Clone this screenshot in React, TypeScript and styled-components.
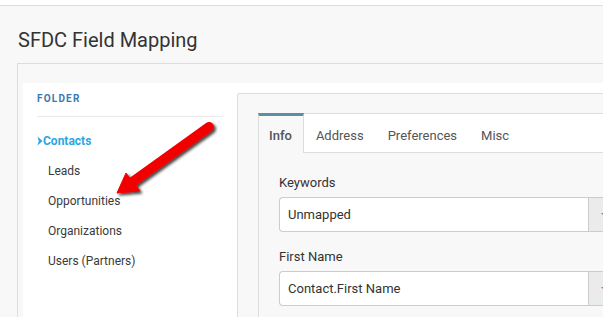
import React from 'react';
import styled, { createGlobalStyle } from 'styled-components';

const GlobalStyle = createGlobalStyle`
  html, body {
    margin: 0;
    padding: 0;
    background: #f8f8f8;
    font-family: Roboto, "Liberation Sans", Arial, sans-serif;
    color: #333;
    overflow: hidden;
  }
`;

const Page = styled.div`
  position: relative;
  width: 603px;
  height: 317px;
  overflow: hidden;
`;

const TopBar = styled.div`
  height: 5px;
  background: #fff;
  border-bottom: 1px solid #dedede;
`;

const Title = styled.h1`
  margin: 22px 0 0 18px;
  font-size: 20px;
  line-height: 24px;
  font-weight: 400;
  color: #333;
`;

const Panel = styled.div`
  margin: 11px 0 0 17px;
  width: 700px;
  height: 300px;
  border: 1px solid #dddddd;
  background: #f8f8f8;
  padding: 19px 0 0 5px;
`;

const WhiteArea = styled.div`
  display: flex;
  background: #fff;
  height: 100%;
`;

const Sidebar = styled.div`
  width: 186px;
  padding: 10px 14px 0 14px;
  flex-shrink: 0;
`;

const FolderHeading = styled.div`
  font-size: 10px;
  line-height: 12px;
  font-weight: 700;
  letter-spacing: 1.2px;
  color: #3b78b5;
  padding-bottom: 11px;
  border-bottom: 1px solid #eaeaea;
  margin-bottom: 9px;
`;

const FolderItem = styled.div<{ $active?: boolean }>`
  display: flex;
  align-items: center;
  height: 30px;
  font-size: 12px;
  padding-left: ${({ $active }) => ($active ? '0' : '11px')};
  font-weight: ${({ $active }) => ($active ? 700 : 400)};
  color: ${({ $active }) => ($active ? '#2aa6e3' : '#3a3a3a')};
`;

const Chevron = styled.svg`
  width: 6px;
  height: 10px;
`;

const Card = styled.div`
  margin-top: 10px;
  flex: 1;
  border: 1px solid #dddddd;
  border-radius: 2px 0 0 0;
  background: #f8f8f8;
  padding: 19px 0 0 20px;
`;

const TabBox = styled.div`
  border-left: 1px solid #dddddd;
  border-top: 1px solid #dddddd;
  height: 100%;
`;

const TabBar = styled.div`
  display: flex;
  height: 38px;
  background: #fff;
  border-bottom: 1px solid #dddddd;
`;

const Tab = styled.div<{ $active?: boolean }>`
  display: flex;
  align-items: center;
  padding: 1px 11px 0 ${({ $active }) => ($active ? '10px' : '11px')};
  margin-top: -1px;
  margin-bottom: -1px;
  margin-left: ${({ $active }) => ($active ? '-1px' : '0')};
  font-size: 13px;
  color: #555;
  font-weight: ${({ $active }) => ($active ? 500 : 400)};
  background: ${({ $active }) => ($active ? '#f8f8f8' : 'transparent')};
  border: 1px solid ${({ $active }) => ($active ? '#dddddd' : 'transparent')};
  border-top: 3px solid ${({ $active }) => ($active ? '#5c8fa6' : 'transparent')};
  border-bottom: none;
`;

const TabContent = styled.div`
  padding: 21px 0 0 20px;
`;

const FieldLabel = styled.div`
  font-size: 13px;
  line-height: 18px;
  color: #333;
  margin-bottom: 5px;
`;

const Field = styled.div`
  margin-bottom: 16px;
`;

const SelectRow = styled.div`
  display: flex;
  height: 35px;
`;

const SelectValue = styled.div`
  width: 300px;
  display: flex;
  align-items: center;
  padding-left: 8px;
  font-size: 13px;
  color: #333;
  background: #fff;
  border: 1px solid #cccccc;
  border-right: none;
  border-radius: 4px 0 0 4px;
`;

const SelectButton = styled.div`
  width: 30px;
  display: flex;
  align-items: center;
  justify-content: center;
  background: #ebebeb;
  border: 1px solid #cccccc;
`;

const Caret = styled.div`
  width: 0;
  height: 0;
  border-left: 3px solid transparent;
  border-right: 3px solid transparent;
  border-top: 3px solid #c8703c;
`;

const ArrowOverlay = styled.svg`
  position: absolute;
  left: 0;
  top: 0;
  pointer-events: none;
`;

const folders = ['Leads', 'Opportunities', 'Organizations', 'Users (Partners)'];
const tabs = ['Info', 'Address', 'Preferences', 'Misc'];

const Select = ({ value }: { value: string }) => (
    <SelectRow>
        <SelectValue>{value}</SelectValue>
        <SelectButton><Caret /></SelectButton>
    </SelectRow>
);

const App = () => {
    return (
        <Page>
            <GlobalStyle />
            <TopBar />
            <Title>SFDC Field Mapping</Title>
            <Panel>
                <WhiteArea>
                    <Sidebar>
                        <FolderHeading>FOLDER</FolderHeading>
                        <FolderItem $active>
                            <Chevron viewBox="0 0 6 10">
                                <path d="M0.5 0.5 L5.5 5 L0.5 9.5 L1.8 5 Z" fill="#2aa6e3" />
                            </Chevron>
                            Contacts
                        </FolderItem>
                        {folders.map(f => <FolderItem key={f}>{f}</FolderItem>)}
                    </Sidebar>
                    <Card>
                        <TabBox>
                            <TabBar>
                                {tabs.map((t, i) => <Tab key={t} $active={i === 0}>{t}</Tab>)}
                            </TabBar>
                            <TabContent>
                                <Field>
                                    <FieldLabel>Keywords</FieldLabel>
                                    <Select value="Unmapped" />
                                </Field>
                                <Field>
                                    <FieldLabel>First Name</FieldLabel>
                                    <Select value="Contact.First Name" />
                                </Field>
                            </TabContent>
                        </TabBox>
                    </Card>
                </WhiteArea>
            </Panel>
            {/* red callout arrow pointing at Opportunities */}
            <ArrowOverlay width="603" height="317" viewBox="0 0 603 317">
                <defs>
                    <filter id="shadow" x="-20%" y="-20%" width="140%" height="140%">
                        <feDropShadow dx="2" dy="2" stdDeviation="1.5" floodColor="#000" floodOpacity="0.75" />
                    </filter>
                </defs>
                <g filter="url(#shadow)" fill="#f20000" stroke="#f20000">
                    <line x1="209" y1="127" x2="131" y2="183" strokeWidth="10" strokeLinecap="round" />
                    <polygon points="117,193 140,191 126,173" strokeWidth="1" strokeLinejoin="round" />
                </g>
            </ArrowOverlay>
        </Page>
    );
};

export default App;
